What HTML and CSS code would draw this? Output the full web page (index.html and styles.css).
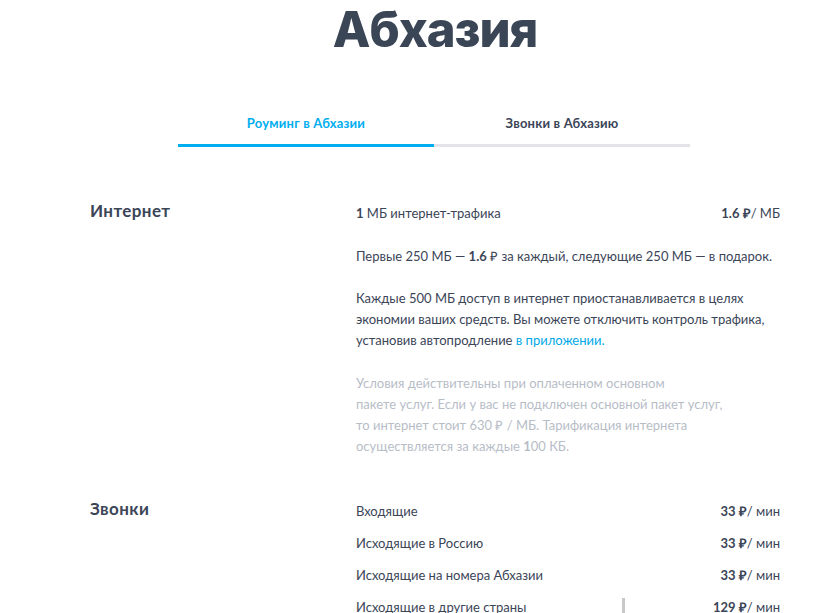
FILE: index.html
```html
<!DOCTYPE html>
<html lang="ru">
<head>
<meta charset="utf-8">
<link rel="stylesheet" href="styles.css">
</head>
<body>
<div class="page">
  <h1 class="title">Абхазия</h1>
  <div class="tabs">
    <div class="tab tab-active">Роуминг в Абхазии</div>
    <div class="tab">Звонки в Абхазию</div>
  </div>
  <section class="block block-internet">
    <h2 class="block-title">Интернет</h2>
    <div class="block-body">
      <div class="row"><span><b class="num">1</b> МБ интернет-трафика</span><span class="price"><b class="num">1.6 ₽</b>/ МБ</span></div>
      <p class="para">Первые 250 МБ — <b class="num">1.6</b> ₽ за каждый, следующие 250 МБ — в подарок.</p>
      <p class="para">Каждые 500 МБ доступ в интернет приостанавливается в целях экономии ваших средств. Вы можете отключить контроль трафика, установив автопродление <a class="link" href="#">в приложении.</a></p>
      <p class="para note">Условия действительны при оплаченном основном<br>пакете услуг. Если у вас не подключен основной пакет услуг,<br>то интернет стоит 630 ₽ / МБ. Тарификация интернета<br>осуществляется за каждые <b class="num">1</b>00 КБ.</p>
    </div>
  </section>
  <section class="block block-calls">
    <h2 class="block-title">Звонки</h2>
    <div class="block-body">
      <div class="row call"><span>Входящие</span><span class="price"><b class="num">33 ₽</b>/ мин</span></div>
      <div class="row call"><span>Исходящие в Россию</span><span class="price"><b class="num">33 ₽</b>/ мин</span></div>
      <div class="row call"><span>Исходящие на номера Абхазии</span><span class="price"><b class="num">33 ₽</b>/ мин</span></div>
      <div class="row call"><span>Исходящие в другие страны</span><span class="price"><b class="num">129 ₽</b>/ мин</span><span class="bar"></span></div>
    </div>
  </section>
</div>
</body>
</html>
```
FILE: styles.css
```css
html, body {
  margin: 0;
  padding: 0;
  background: #fff;
  overflow: hidden;
}
body {
  font-family: "Lato", "Open Sans", sans-serif;
  color: #3b4557;
  width: 826px;
  height: 613px;
}
.page {
  width: 690px;
  margin-left: 90px;
  display: flex;
  flex-direction: column;
}
.title {
  margin: 0;
  font-family: "Inter", sans-serif;
  font-weight: 800;
  font-size: 49px;
  line-height: 60px;
  text-align: center;
  color: #3a4556;
  letter-spacing: -1px;
  height: 60px;
}
.tabs {
  display: flex;
  width: 512px;
  margin: 55px auto 0 auto;
  position: relative;
  left: -1px;
}
.tab {
  flex: 1;
  text-align: center;
  font-size: 13px;
  font-weight: 700;
  letter-spacing: 0.2px;
  line-height: 16px;
  padding-bottom: 13px;
  border-bottom: 3px solid #e3e3e9;
  color: #3b4557;
}
.tab-active {
  color: #00aeef;
  border-bottom-color: #00aeef;
}
.block {
  display: flex;
}
.block-internet {
  margin-top: 53px;
}
.block-calls {
  margin-top: 41px;
}
.block-title {
  margin: 0;
  width: 266px;
  flex: none;
  font-size: 17px;
  font-weight: 700;
  letter-spacing: 0.4px;
  line-height: 22px;
  color: #3b4557;
}
.block-body {
  flex: 1;
  font-size: 13px;
  line-height: 21px;
}
.row {
  display: flex;
  justify-content: space-between;
  position: relative;
  padding-top: 3px;
}
.row.call {
  height: 32px;
  padding-top: 3px;
  box-sizing: border-box;
}
.num {
  font-weight: 700;
}
.price {
  white-space: nowrap;
}
.para {
  margin: 21px 0 0 0;
}
.para:first-of-type {
  margin-top: 22px;
}
.note {
  color: #b7bdc7;
  margin-top: 22px;
}
.link {
  color: #00a8e8;
  text-decoration: none;
}
.bar {
  position: absolute;
  left: 266px;
  top: 4px;
  width: 3px;
  height: 20px;
  background: #c8c8c8;
}
```
